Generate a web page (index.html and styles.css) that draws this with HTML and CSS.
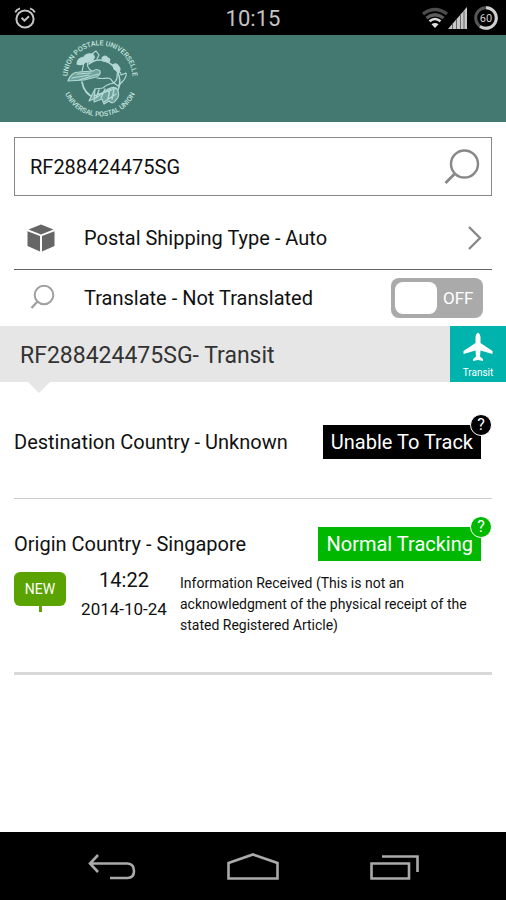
FILE: index.html
```
<!DOCTYPE html>
<html lang="en">
<head>
    <meta charset="UTF-8">
    <meta name="viewport" content="width=device-width, initial-scale=1.0">
    <title>RF288424475SG - Transit</title>
    <link rel="stylesheet" href="styles.css">
</head>
<body>

    <!-- Status bar -->
    <div class="status-bar">
        <svg class="alarm" width="22" height="22" viewBox="0 0 22 22" fill="none" stroke="#c4c4c4" stroke-width="2">
            <circle cx="11" cy="12" r="8.6"/>
            <path d="M1.2 5.4Q2.6 2.4 6 1.4M20.8 5.4Q19.4 2.4 16 1.4"/>
            <path d="M7.6 10.8L10.4 13.6L15 9.2"/>
        </svg>
        <span class="clock">10:15</span>
        <div class="status-icons">
            <svg width="28" height="22" viewBox="0 0 28 22" fill="none">
                <path d="M2 7Q14 -2 26 7" stroke="#4c4c4c" stroke-width="3.4"/>
                <path d="M5.5 11Q14 4.5 22.5 11" stroke="#5c5c5c" stroke-width="3.2"/>
                <path d="M8.5 14.2Q14 9.8 19.5 14.2" stroke="#e0e0e0" stroke-width="2.6"/>
                <path d="M10.5 17.2Q14 14.6 17.5 17.2L14 21Z" fill="#e0e0e0"/>
            </svg>
            <svg class="signal" width="20" height="22" viewBox="0 0 20 22">
                <path d="M0 22L19 0V22Z" fill="#c8c8c8"/>
                <path d="M4.5 17V22M8.5 12V22M12.5 8V22M16 4V22" stroke="#666" stroke-width="1"/>
            </svg>
            <svg class="battery" width="24" height="24" viewBox="0 0 24 24" fill="none" stroke-width="3">
                <circle cx="12" cy="12" r="10.3" stroke="#555"/>
                <path d="M12 1.7A10.3 10.3 0 1 1 6 20.4" stroke="#d0d0d0"/>
                <text x="12" y="16">60</text>
            </svg>
        </div>
    </div>

    <header>
        <svg class="logo" width="82" height="82" viewBox="0 0 82 82">
            <defs>
                <path id="arc-top" d="M8.1 47A32.5 32.5 0 1 1 71.9 47"/>
                <path id="arc-bottom" d="M1.7 37A38.5 38.5 0 1 0 78.3 37"/>
            </defs>
            <text><textPath href="#arc-top" startOffset="50%">UNION POSTALE UNIVERSELLE</textPath></text>
            <text><textPath href="#arc-bottom" startOffset="50%">UNIVERSAL POSTAL UNION</textPath></text>
            <g fill="none" stroke="#b4d8d3" stroke-width="1.2" stroke-linecap="round" stroke-linejoin="round">
                <path d="M22 45Q24 57 35 61M29 27Q36 21 45 24Q54 27 58 36Q61 43 59 50Q57 56 53 59" stroke-width="1.6"/>
                <path d="M17 27Q17 21 24 20Q26 16 32 17Q36 19 33 23Q30 26 26 25Q21 29 17 27Z" fill="#b4d8d3"/>
                <path d="M32 17L36 14L39 18L37 22M24 25L22 35M28 25Q26 31 32 34"/>
                <path d="M8 44Q11 35 19 35L33 34Q37 31 40 34Q41 38 36 40L24 43ZM12 41L29 38M19 43L38 37M17 37L31 36" fill="#6ea39b"/>
                <path d="M42 21Q45 17 48 21Q51 22 49 25L43 24ZM53 28Q57 25 59 30Q61 32 59 35L54 32Z" fill="#b4d8d3"/>
                <path d="M37 41Q42 42 47 41Q51 41 52 44L54 46Q47 47 43 51L35 52M57 37Q61 33 61 38L66 36Q67 39 63 44L58 49L54 46Q58 42 57 37Z"/>
                <path d="M35 52L29 64Q39 60 48 52Q56 48 58 54Q60 59 56 63Q53 68 49 64L44 67L42 62L34 65Z" fill="#6ea39b"/>
                <path d="M39 53L36 61M45 52L41 61M50 52L48 62M54 52L52 62M34 59L56 51M44 65L56 57" stroke-width="1.4"/>
            </g>
        </svg>
    </header>

    <main>
        <form class="options">
            <div class="search-box">
                <input type="text" id="tracking-number" name="number" value="RF288424475SG" aria-label="Tracking number">
                <button type="submit" aria-label="Search">
                    <svg width="36" height="36" viewBox="0 0 36 36" fill="none" stroke="#888" stroke-width="2.4">
                        <circle cx="20.5" cy="15" r="13.5"/>
                        <path d="M11 24.5L1.5 34" stroke-width="2.8"/>
                    </svg>
                </button>
            </div>

            <button type="button" class="option shipping">
                <svg class="option-icon" width="28" height="28" viewBox="0 0 28 28" fill="#666">
                    <path d="M14 0.5L26.5 5.5L14 10.5L1.5 5.5Z"/>
                    <path d="M0.5 7.2L13 12V27.5L0.5 22Z"/>
                    <path d="M27.5 7.2L15 12V27.5L27.5 22Z"/>
                </svg>
                <span>Postal Shipping Type - Auto</span>
                <svg class="chevron" width="14" height="24" viewBox="0 0 14 24" fill="none" stroke="#888" stroke-width="2.4">
                    <path d="M1 1L12 12L1 23"/>
                </svg>
            </button>

            <div class="option translate">
                <svg class="option-icon" width="28" height="28" viewBox="0 0 28 28" fill="none" stroke="#a0a0a0" stroke-width="2">
                    <circle cx="17" cy="11" r="9.3"/>
                    <path d="M10.5 17.5L4.5 24" stroke-width="2.4"/>
                </svg>
                <label for="translate">Translate - Not Translated</label>
                <label class="toggle">
                    <input type="checkbox" id="translate" name="translate">
                    <span>OFF</span>
                </label>
            </div>
        </form>

        <section class="result-title">
            <h1>RF288424475SG- Transit</h1>
            <div class="transit">
                <svg width="30" height="30" viewBox="0 0 30 30" fill="#fff">
                    <path d="M15 0.5Q17.5 2 17.5 5V11L29.5 19V22L17.5 18.5L17 24.5L20 27V29L15 28L10 29V27L13 24.5L12.5 18.5L0.5 22V19L12.5 11V5Q12.5 2 15 0.5Z"/>
                </svg>
                <span>Transit</span>
            </div>
        </section>

        <section class="country destination">
            <div class="country-head">
                <h2>Destination Country - Unknown</h2>
                <div class="state">Unable To Track<button type="button" class="help" aria-label="Help">?</button></div>
            </div>
        </section>

        <section class="country origin">
            <div class="country-head">
                <h2>Origin Country - Singapore</h2>
                <div class="state">Normal Tracking<button type="button" class="help" aria-label="Help">?</button></div>
            </div>
            <div class="event">
                <span class="new">NEW</span>
                <div class="when">
                    <span class="time">14:22</span>
                    <span class="date">2014-10-24</span>
                </div>
                <p>Information Received (This is not an acknowledgment of the physical receipt of the stated Registered Article)</p>
            </div>
        </section>
    </main>

    <!-- Navigation bar -->
    <nav>
        <button type="button" aria-label="Back">
            <svg width="52" height="30" viewBox="0 0 52 30" fill="none" stroke="#aaa" stroke-width="2.6">
                <path d="M12 2L4 10.5L12 19M4 10.5H41.5Q48 11 48 18Q48 25 41.5 25H24"/>
            </svg>
        </button>
        <button type="button" aria-label="Home">
            <svg width="52" height="30" viewBox="0 0 52 30" fill="none" stroke="#aaa" stroke-width="2.6">
                <path d="M1.5 10L26 1.5L50.5 10V25.5H1.5Z"/>
            </svg>
        </button>
        <button type="button" aria-label="Recent apps">
            <svg width="52" height="30" viewBox="0 0 52 30" fill="none" stroke="#aaa" stroke-width="2.6">
                <path d="M3.5 10.5H41V25.5H3.5ZM14 3.5H49.5V19"/>
            </svg>
        </button>
    </nav>

</body>
</html>
```
FILE: styles.css
```
* {
    box-sizing: border-box;
}

body {
    font-family: Roboto, sans-serif;
    font-size: 20px;
    color: #111;
    background-color: #fff;
    display: flex;
    flex-direction: column;
    min-height: 100vh;
    margin: 0;
}

h1, h2, p {
    margin: 0;
    font-weight: 400;
}

button {
    font-family: inherit;
    font-size: inherit;
    color: inherit;
    background: none;
    border: none;
    padding: 0;
    cursor: pointer;
}

svg {
    display: block;
    flex-shrink: 0;
}

.status-bar {
    display: grid;
    grid-template-columns: 1fr auto 1fr;
    align-items: center;
    height: 35px;
    padding: 0 8px 0 14px;
    background-color: #000;
    color: #c4c4c4;
}

.clock {
    margin-right: 6px;
    padding-top: 1px;
    font-size: 22px;
}

.status-icons {
    display: flex;
    align-items: center;
    justify-content: flex-end;
}

.signal {
    margin-left: -1px;
}

.battery {
    margin-left: 6px;
}

.battery text {
    font-size: 11px;
    fill: #d0d0d0;
    text-anchor: middle;
}

header {
    background-color: #437971;
    padding: 2px 60px 3px;
}

.logo text {
    font-size: 7px;
    font-weight: 500;
    fill: #c3e3df;
    text-anchor: middle;
}

main {
    flex: 1;
}

.options {
    padding: 15px 14px 0;
}

.search-box {
    display: flex;
    align-items: center;
    height: 59px;
    padding: 0 11px 0 15px;
    border: 1px solid #888;
}

.search-box input {
    flex: 1;
    min-width: 0;
    padding: 0;
    border: none;
    outline: none;
    background: none;
    font: inherit;
    color: inherit;
}

.option {
    display: flex;
    align-items: center;
    width: 100%;
    padding: 0 10px 0 13px;
    text-align: left;
}

.option-icon {
    margin-right: 29px;
}

.shipping {
    height: 74px;
    padding-top: 10px;
    border-bottom: 1px solid #666;
}

.chevron {
    margin-left: auto;
}

.translate {
    height: 56px;
    padding-right: 9px;
}

.toggle {
    display: flex;
    align-items: center;
    gap: 6px;
    width: 92px;
    height: 40px;
    margin-left: auto;
    padding: 4px;
    border-radius: 8px;
    background-color: #aaa;
    color: #fff;
    font-size: 17px;
    cursor: pointer;
}

.toggle input {
    appearance: none;
    width: 42px;
    height: 32px;
    margin: 0;
    border-radius: 8px;
    background-color: #fff;
}

.result-title {
    position: relative;
    display: flex;
    align-items: center;
    justify-content: space-between;
    height: 56px;
    padding-left: 20px;
    background-color: #e6e6e6;
}

.result-title::after {
    content: "";
    position: absolute;
    top: 100%;
    left: 28px;
    border: 11px solid transparent;
    border-top-color: #e6e6e6;
    border-bottom: none;
}

.result-title h1 {
    padding-top: 2px;
    font-size: 23px;
    color: #333;
}

.transit {
    display: flex;
    flex-direction: column;
    align-items: center;
    gap: 4px;
    width: 56px;
    height: 56px;
    padding-top: 6px;
    background-color: #00b3ad;
    color: #fff;
    font-size: 10px;
    line-height: 14px;
}

.country {
    margin: 0 14px;
}

.country-head {
    display: flex;
    align-items: center;
    justify-content: space-between;
    padding-right: 11px;
}

.country h2 {
    font-size: 20px;
}

.state {
    position: relative;
    padding: 0 8px;
    color: #fff;
    line-height: 34px;
}

.help {
    position: absolute;
    top: -11px;
    right: -11px;
    width: 22px;
    height: 22px;
    border: 1px solid #fff;
    border-radius: 50%;
    font-size: 16px;
    line-height: 20px;
}

.destination {
    padding: 43px 0 39px;
    border-bottom: 1px solid #ccc;
}

.destination .state, .destination .help {
    background-color: #000;
}

.origin {
    padding: 28px 0 36px;
    border-bottom: 3px solid #d8d8d8;
}

.origin .state, .origin .help {
    background-color: #00b800;
}

.event {
    display: flex;
    align-items: flex-start;
    padding-top: 7px;
}

.new {
    position: relative;
    width: 52px;
    margin-top: 4px;
    border-radius: 6px;
    background-color: #5aa300;
    color: #fff;
    font-size: 14px;
    line-height: 34px;
    text-align: center;
}

.new::after {
    content: "";
    position: absolute;
    top: 100%;
    left: 25px;
    width: 3px;
    height: 6px;
    background-color: #5aa300;
}

.when {
    display: flex;
    flex-direction: column;
    align-items: center;
    width: 114px;
    padding-left: 2px;
}

.time {
    line-height: 24px;
}

.date {
    font-size: 17px;
    line-height: 34px;
}

.event p {
    flex: 1;
    padding-top: 5px;
    font-size: 14px;
    line-height: 21px;
}

nav {
    display: flex;
    align-items: center;
    justify-content: space-between;
    height: 68px;
    padding: 4px 86px 0;
    background-color: #000;
}
```
